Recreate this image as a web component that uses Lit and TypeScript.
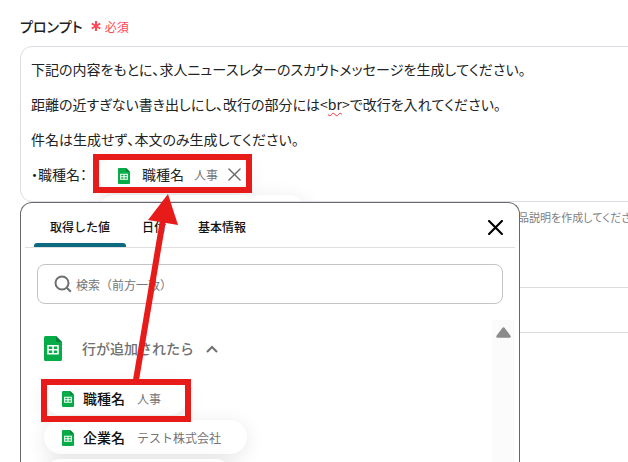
import { LitElement, html, css, svg } from "lit";
import { customElement, property, state } from "lit/decorators.js";
import { classMap } from "lit/directives/class-map.js";

@customElement("sheet-icon")
class SheetIcon extends LitElement {
  static styles = css`
    :host {
      display: block;
      flex: none;
      width: 12px;
      height: 16px;
    }
    :host([large]) {
      width: 18px;
      height: 25px;
    }
    .icon {
      display: block;
      width: 100%;
      height: 100%;
    }
  `;

  @property({ type: Boolean, reflect: true }) large = false;

  render() {
    return html`<svg class="icon" viewBox="0 0 18 25" preserveAspectRatio="none" aria-hidden="true">
      <path d="M1.500 0H12l6 6v17.500a1.500 1.500 0 0 1-1.500 1.500h-15A1.500 1.500 0 0 1 0 23.500v-22A1.500 1.500 0 0 1 1.500 0z" fill="#05ac47" />
      <path d="M12 0l6 6h-4.500A1.500 1.500 0 0 1 12 4.500z" fill="#078338" />
      <path d="M3.200 9h11.600v9.500H3.200z M4.800 10.600v2.400h3.400v-2.400z M9.800 10.600v2.400h3.400v-2.400z M4.800 14.500v2.400h3.400v-2.400z M9.800 14.500v2.400h3.400v-2.400z" fill="#fff" fill-rule="evenodd" />
    </svg>`;
  }
}

const cross = (width: number) => svg`<path d="M1 1l12 12M13 1L1 13" fill="none" stroke="currentColor" stroke-width=${width} stroke-linecap="round" />`;

interface Entry {
  name: string;
  value: string;
}

@customElement("value-picker")
class ValuePicker extends LitElement {
  static styles = css`
    :host {
      display: flex;
      flex-direction: column;
      box-sizing: border-box;
      border: 1px solid #66686b;
      border-radius: 12px 12px 0 0;
      background: #fff;
      padding: 0 4px;
      overflow: hidden;
    }
    button {
      font: inherit;
      color: inherit;
      background: none;
      border: 0;
      padding: 0;
    }
    .head {
      display: flex;
      align-items: center;
      height: 44px;
      border-bottom: 1px solid #e0e0e0;
      padding: 0 12px 0 9px;
    }
    .tabs {
      display: flex;
      align-self: stretch;
      flex: 1;
    }
    .tab {
      box-sizing: border-box;
      padding: 6px 16px 0;
      border-bottom: 4px solid transparent;
      font-size: 12px;
      font-weight: 500;
      color: #111;
      position: relative;
    }
    .current::after {
      content: "";
      position: absolute;
      left: 0;
      right: 0;
      bottom: -4px;
      height: 4px;
      border-radius: 3px 3px 0 0;
      background: #0b6a80;
    }
    .close {
      display: block;
      margin-top: 4px;
    }
    .close svg {
      display: block;
      width: 15px;
      height: 15px;
      color: #000;
    }
    .search {
      display: flex;
      align-items: center;
      gap: 4px;
      box-sizing: border-box;
      height: 40px;
      margin: 16px 12px;
      padding: 0 16px;
      border: 1px solid #c4c4c4;
      border-radius: 8px;
    }
    .search svg {
      flex: none;
      width: 18px;
      height: 18px;
    }
    .search input {
      flex: 1;
      min-width: 0;
      border: 0;
      outline: 0;
      padding: 0;
      background: none;
      font: inherit;
      font-size: 12px;
      color: #333;
    }
    .search input::placeholder {
      color: #757575;
      opacity: 1;
    }
    .body {
      display: flex;
      flex: 1;
      min-height: 0;
    }
    .list {
      flex: 1;
      padding: 15px 18px;
    }
    .group {
      display: flex;
      align-items: center;
      height: 26px;
      font-size: 14px;
      font-weight: 500;
      color: #707070;
    }
    .group span {
      margin: 0 12px 0 20px;
    }
    .group svg {
      width: 12px;
      height: 8px;
      margin-top: 2px;
    }
    .pills {
      display: flex;
      flex-direction: column;
      align-items: flex-start;
      gap: 5px;
      margin: 20px 0 0;
      padding: 0;
      list-style: none;
    }
    .pill {
      display: flex;
      align-items: center;
      height: 34px;
      padding: 0 26px 0 18px;
      border-radius: 17px;
      background: #fff;
      box-shadow: 0 4px 20px rgba(0, 0, 0, 0.1);
    }
    .pill sheet-icon {
      margin-top: 2px;
    }
    .list {
      padding-left: 19px;
    }
    .name {
      margin: 0 12px 0 9px;
      font-size: 14px;
      font-weight: 500;
      color: #111;
    }
    .value {
      font-size: 12px;
      color: #757575;
    }
    .blank {
      width: 144px;
    }
    .track {
      width: 23px;
      background: #fbfbfb;
    }
    .track svg {
      display: block;
      width: 15px;
      height: 11px;
      margin: 7px auto;
    }
  `;

  @property({ attribute: false }) entries: Entry[] = [];
  @state() private tab = 0;

  render() {
    return html`
      <div class="head">
        <div class="tabs" role="tablist">
          ${["取得した値", "日付", "基本情報"].map(
            (label, i) => html`<button
              class=${classMap({ tab: true, current: i === this.tab })}
              role="tab"
              aria-selected=${i === this.tab}
              @click=${() => (this.tab = i)}
            >${label}</button>`
          )}
        </div>
        <button class="close" aria-label="閉じる"><svg viewBox="0 0 14 14">${cross(2)}</svg></button>
      </div>
      <label class="search">
        <svg viewBox="0 0 18 18" aria-hidden="true" fill="none" stroke="#6f6f6f" stroke-width="2">
          <circle cx="8" cy="8" r="6.500" /><path d="M12.800 12.800l4 4" />
        </svg>
        <input type="text" placeholder="検索（前方一致）" aria-label="検索" />
      </label>
      <div class="body">
        <div class="list">
          <button class="group" aria-expanded="true">
            <sheet-icon large></sheet-icon>
            <span>行が追加されたら</span>
            <svg viewBox="0 0 12 8" fill="none" stroke="#707070" stroke-width="2"><path d="M1 7l5-5 5 5" /></svg>
          </button>
          <ul class="pills">
            ${this.entries.map(
              (e) => html`<li>
                <button class="pill">
                  <sheet-icon></sheet-icon>
                  <span class="name">${e.name}</span>
                  <span class="value">${e.value}</span>
                </button>
              </li>`
            )}
            <li class="pill blank"></li>
          </ul>
        </div>
        <div class="track">
          <svg viewBox="0 0 15 11" aria-hidden="true"><path d="M7.500 1.500L13.500 9.500H1.500z" fill="#8b8b8b" stroke="#8b8b8b" stroke-width="2.500" stroke-linejoin="round" /></svg>
        </div>
      </div>
    `;
  }
}

@customElement("app-root")
class AppRoot extends LitElement {
  static styles = css`
    :host {
      display: block;
      position: relative;
      min-height: 100vh;
      overflow: hidden;
      background: #fff;
      color: #222;
      font-family: "Noto Sans CJK JP", sans-serif;
    }
    .form {
      margin: 0 -20px 0 20px;
      padding-top: 16px;
      font-feature-settings: "palt";
      font-kerning: none;
    }
    .title {
      display: flex;
      align-items: center;
      gap: 8px;
      height: 20px;
      margin-bottom: 10px;
      font-size: 14px;
      font-weight: 500;
    }
    .required {
      display: flex;
      align-items: center;
      gap: 4px;
      font-size: 12px;
      font-weight: 400;
      color: #ff4757;
    }
    .required svg {
      width: 10px;
      height: 10px;
    }
    .editor {
      box-sizing: border-box;
      height: 156px;
      padding: 5px 10px 0;
      border: 1px solid #dcdce4;
      border-radius: 12px;
      overflow: hidden;
      outline: 0;
      font-size: 14px;
      line-height: 35px;
    }
    .editor p {
      display: flex;
      align-items: center;
      height: 35px;
      margin: 0;
      white-space: nowrap;
    }
    .typo {
      text-decoration: underline wavy #e33 1px;
      text-underline-offset: 2px;
    }
    .chip {
      display: flex;
      align-items: center;
      box-sizing: border-box;
      height: 34px;
      margin-left: 11px;
      padding: 0 8px 0 20px;
      border-radius: 17px;
      background: #fff;
      box-shadow: 0 4px 20px rgba(0, 0, 0, 0.1);
    }
    .chip sheet-icon {
      margin-top: 2px;
    }
    .chip .name {
      margin: 0 10px 0 12px;
    }
    .chip .value {
      font-size: 12px;
      color: #757575;
    }
    .chip button {
      margin-left: 10px;
      padding: 0;
      border: 0;
      background: none;
      color: #6a6a6a;
    }
    .chip svg {
      display: block;
      width: 13px;
      height: 13px;
    }
    .next {
      width: 208px;
      flex: none;
      margin: 4px 0 0 67px;
    }
    .hint {
      margin: 5px 0 0;
      padding-left: 498px;
      font-size: 11px;
      line-height: 20px;
      color: #808080;
      white-space: nowrap;
    }
    .field {
      display: block;
      box-sizing: border-box;
      width: 100%;
      height: 46px;
      margin-top: 60px;
      border: 1px solid #dcdce0;
      border-radius: 12px;
      background: none;
    }
    value-picker {
      position: absolute;
      top: 202px;
      bottom: 0;
      left: 20px;
      width: 500px;
      border-bottom: 0;
    }
    .marks {
      position: absolute;
      top: 0;
      left: 0;
      width: 260px;
      height: 430px;
      pointer-events: none;
    }
  `;

  private entries: Entry[] = [
    { name: "職種名", value: "人事" },
    { name: "企業名", value: "テスト株式会社" },
  ];

  render() {
    return html`
      <div class="form">
        <div class="title">
          <span id="prompt">プロンプト</span>
          <span class="required">
            <svg viewBox="0 0 10 10" stroke="currentColor" stroke-width="2"><path d="M5 0v10M.700 2.500l8.600 5M9.300 2.500l-8.600 5" /></svg>必須
          </span>
        </div>
        <div class="editor" role="textbox" aria-multiline="true" aria-labelledby="prompt" contenteditable="true" spellcheck="false">
          <p>下記の内容をもとに、求人ニュースレターのスカウトメッセージを生成してください。</p>
          <p>距離の近すぎない書き出しにし、改行の部分には&lt;<span class="typo">br</span>&gt;で改行を入れてください。</p>
          <p>件名は生成せず、本文のみ生成してください。</p>
          <p>
            ・職種名：
            <span class="chip" contenteditable="false">
              <sheet-icon></sheet-icon>
              <span class="name">職種名</span>
              <span class="value">人事</span>
              <button aria-label="削除"><svg viewBox="0 0 14 14">${cross(1.5)}</svg></button>
            </span>
          </p>
          <p><span class="chip next"></span></p>
        </div>
        <p class="hint">品説明を作成してください</p>
        <input class="field" type="text" aria-label="値" />
      </div>
      <value-picker .entries=${this.entries}></value-picker>
      <svg class="marks" viewBox="0 0 260 430" aria-hidden="true">
        <g fill="none" stroke="#e81b1b" stroke-width="6">
          <rect x="96" y="157" width="153" height="33" />
          <rect x="44" y="382" width="144" height="37" />
          <path d="M136 380L163 220" />
        </g>
        <path d="M168 194L148 220l30 5z" fill="#e81b1b" />
      </svg>
    `;
  }
}
